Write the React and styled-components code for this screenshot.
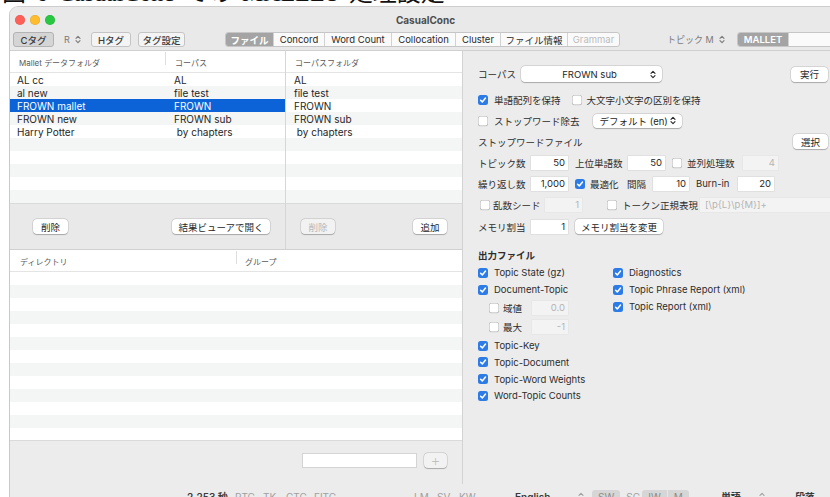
import React from 'react';
import styled, { createGlobalStyle } from 'styled-components';

const SANS = `Inter, "Noto Sans CJK JP", sans-serif`;

const GlobalStyle = createGlobalStyle`
  *, *::before, *::after { box-sizing: border-box; }
  html, body {
    margin: 0;
    padding: 0;
    width: 830px;
    height: 497px;
    overflow: hidden;
    background: #fff;
  }
  body {
    font-family: ${SANS};
    color: #2b2b2b;
  }
  #root { width: 830px; height: 497px; overflow: hidden; }
  svg { flex-shrink: 0; }
`;

const px = v => (v === undefined ? 0 : typeof v === 'number' ? `${v}px` : v);

const Caption = styled.div`
  height: 6px;
  overflow: hidden;
  padding-left: 2px;
  font-family: "Liberation Serif", "Noto Sans CJK JP", serif;
  font-size: 24px;
  line-height: 24px;
  white-space: nowrap;
  color: #111;
  word-spacing: 4px;
  span { display: block; margin-top: -19px; }
`;

const Window = styled.div`
  margin-left: 9px;
  width: 832px;
  height: 491px;
  background: #ececec;
  border-left: 1px solid #c9c9c9;
  border-top: 1px solid #cdcdcd;
  border-top-left-radius: 9px;
  overflow: hidden;
  display: flex;
  flex-direction: column;
`;

const TitleBar = styled.div`
  background: #e9e9e9;
  border-bottom: 1px solid #d0d0d0;
`;

const TitleRow = styled.div`
  height: 25px;
  display: grid;
  grid-template-columns: 1fr auto 1fr;
  align-items: center;
`;

const Lights = styled.div`
  display: flex;
  gap: 5px;
  padding-left: 5px;
`;

const Light = styled.span`
  width: 10px;
  height: 10px;
  border-radius: 50%;
  background: ${p => p.$c};
  box-shadow: inset 0 0 0 0.5px rgba(0, 0, 0, 0.12);
`;

const Title = styled.div`
  font-size: 10px;
  font-weight: 700;
  color: #4d4d4d;
`;

const Toolbar = styled.div`
  height: 18px;
  display: flex;
  align-items: flex-start;
  & > * { flex-shrink: 0; }
`;

const ToolButton = styled.div`
  width: ${p => p.$w}px;
  height: 15px;
  margin-left: ${p => px(p.$ml)};
  display: flex;
  align-items: center;
  justify-content: center;
  border: 1px solid ${p => (p.$on ? '#b3b3b3' : '#c4c4c4')};
  border-radius: 3px;
  background: ${p => (p.$on ? '#d5d5d5' : '#f4f4f4')};
  font-size: 9.5px;
  font-weight: 500;
  color: #3b3b3b;
`;

const ToolText = styled.div`
  width: ${p => p.$w}px;
  height: 15px;
  margin-left: ${p => px(p.$ml)};
  display: flex;
  align-items: center;
  gap: 5px;
  font-size: 9px;
  color: #7a7a7a;
  white-space: nowrap;
`;

const Segmented = styled.div`
  height: 15px;
  margin-left: ${p => px(p.$ml)};
  display: flex;
  border: 1px solid #c6c6c6;
  border-radius: 3px;
  overflow: hidden;
  background: #fafafa;
`;

const Segment = styled.div`
  width: ${p => p.$w}px;
  flex-shrink: 0;
  display: flex;
  align-items: center;
  justify-content: center;
  font-size: 9.5px;
  font-weight: ${p => (p.$on ? 600 : 400)};
  color: ${p => (p.$on ? '#fff' : p.$off ? '#bcbcbc' : '#2b2b2b')};
  background: ${p => (p.$on ? '#a4a4a4' : 'transparent')};
  white-space: nowrap;
  & + & { border-left: 1px solid #d2d2d2; }
`;

const Main = styled.div`
  height: 433px;
  display: flex;
`;

const LeftPane = styled.div`
  width: 453px;
  flex-shrink: 0;
  display: flex;
  flex-direction: column;
  background: #fff;
  border-right: 1px solid #d3d3d3;
`;

const TopTables = styled.div`
  height: 199px;
  display: flex;
  border-bottom: 1px solid #d0d0d0;
`;

const TablePane = styled.div`
  width: ${p => p.$w}px;
  display: flex;
  flex-direction: column;
  border-right: ${p => (p.$divider ? '1px solid #d6d6d6' : 'none')};
`;

const TableHead = styled.div`
  height: 22px;
  flex-shrink: 0;
  display: flex;
  align-items: center;
  padding-top: 1px;
  border-bottom: 1px solid #e4e4e4;
  font-size: 8px;
  color: #5a5a5a;
  background: #fff;
`;

const HeadCell = styled.div`
  position: relative;
  width: ${p => (p.$w ? `${p.$w}px` : 'auto')};
  flex: ${p => (p.$w ? 'none' : 1)};
  padding-left: ${p => p.$pl}px;
  white-space: nowrap;
  &::after {
    content: '';
    display: ${p => (p.$divider ? 'block' : 'none')};
    position: absolute;
    right: 0;
    top: -5px;
    width: 1px;
    height: 13px;
    background: #dedede;
  }
`;

const Rows = styled.div`
  height: ${p => (p.$h ? `${p.$h}px` : 'auto')};
  flex: ${p => (p.$h ? 'none' : 1)};
  overflow: hidden;
`;

const Row = styled.div`
  height: 13px;
  display: flex;
  align-items: center;
  font-size: 10px;
  white-space: pre;
  color: ${p => (p.$sel ? '#fff' : '#262626')};
  background: ${p => (p.$sel ? '#0b63d7' : p.$odd ? '#f4f5f5' : '#fff')};
`;

const Cell = styled.div`
  width: ${p => (p.$w ? `${p.$w}px` : 'auto')};
  flex: ${p => (p.$w ? 'none' : 1)};
  padding-left: ${p => p.$pl}px;
`;

const ButtonBar = styled.div`
  height: 46px;
  flex-shrink: 0;
  display: flex;
  align-items: center;
  justify-content: space-between;
  padding: 0 ${p => p.$pr}px 0 ${p => p.$pl}px;
  border-top: 1px solid #dadada;
  background: #e9e9e9;
`;

const PushButton = styled.div`
  width: ${p => p.$w}px;
  height: 15px;
  flex-shrink: 0;
  margin-left: ${p => px(p.$ml)};
  display: flex;
  align-items: center;
  justify-content: center;
  border-radius: 4px;
  background: ${p => (p.$off ? '#f2f2f2' : '#fff')};
  box-shadow: 0 0 0 0.5px rgba(0, 0, 0, 0.16), 0 0.5px 1px rgba(0, 0, 0, 0.22);
  font-size: 9.5px;
  color: ${p => (p.$off ? '#b8b8b8' : '#262626')};
  white-space: nowrap;
`;

const BottomBar = styled.div`
  height: 44px;
  flex-shrink: 0;
  display: flex;
  justify-content: flex-end;
  align-items: flex-start;
  gap: 7px;
  padding: 12px 15px 0 0;
  border-top: 1px solid #dadada;
  background: #ececec;
`;

const SearchField = styled.div`
  width: 115px;
  height: 15px;
  background: #fff;
  border: 1px solid #d4d4d4;
`;

const RightPane = styled.div`
  flex: 1;
  min-width: 0;
  display: flex;
  flex-direction: column;
  padding: 0 13px 0 15px;
  background: #ececec;
`;

const FormRow = styled.div`
  height: ${p => p.$h}px;
  margin-top: ${p => px(p.$mt)};
  flex-shrink: 0;
  display: flex;
  align-items: center;
`;

const Label = styled.div`
  width: ${p => (p.$w ? `${p.$w}px` : 'auto')};
  margin-left: ${p => px(p.$ml)};
  flex-shrink: 0;
  font-size: 9.5px;
  font-weight: ${p => (p.$bold ? 700 : 400)};
  color: #2d2d2d;
  white-space: nowrap;
`;

const Popup = styled.div`
  width: ${p => p.$w}px;
  height: ${p => p.$h}px;
  margin-left: ${p => px(p.$ml)};
  flex-shrink: 0;
  display: flex;
  align-items: center;
  padding: 0 6px 0 ${p => p.$pl}px;
  border-radius: 4px;
  background: #fff;
  box-shadow: 0 0 0 0.5px rgba(0, 0, 0, 0.16), 0 0.5px 1px rgba(0, 0, 0, 0.22);
  font-size: 9.5px;
  color: #262626;
  span {
    flex: 1;
    text-align: ${p => (p.$center ? 'center' : 'left')};
    white-space: nowrap;
  }
`;

const Field = styled.div`
  width: ${p => p.$w}px;
  height: 14px;
  margin-left: ${p => px(p.$ml)};
  flex-shrink: 0;
  padding: 0 3px 0 5px;
  background: ${p => (p.$off ? '#f3f3f3' : '#fff')};
  box-shadow: 0 0 0 0.5px rgba(0, 0, 0, ${p => (p.$off ? 0.04 : 0.1)});
  font-size: 9.5px;
  line-height: 14px;
  text-align: ${p => (p.$left ? 'left' : 'right')};
  color: ${p => (p.$off ? '#b4b4b4' : '#262626')};
  white-space: nowrap;
  overflow: hidden;
`;

const CheckWrap = styled.div`
  display: flex;
  align-items: center;
  gap: ${p => p.$gap}px;
  margin-left: ${p => px(p.$ml)};
  flex-shrink: 0;
`;

const Box = styled.span`
  width: 10px;
  height: 10px;
  flex-shrink: 0;
  display: flex;
  align-items: center;
  justify-content: center;
  border-radius: 2.5px;
  background: ${p => (p.$on ? '#2c7be6' : '#fff')};
  box-shadow: ${p => (p.$on ? 'none' : 'inset 0 0 0 0.5px rgba(0,0,0,0.32), 0 0.5px 0.5px rgba(0,0,0,0.08)')};
`;

const CheckText = styled.span`
  width: ${p => (p.$w ? `${p.$w}px` : 'auto')};
  font-size: 9.5px;
  color: #2d2d2d;
  white-space: nowrap;
`;

const OutputGrid = styled.div`
  display: flex;
  margin-top: 2px;
`;

const OutputColumn = styled.div`
  width: ${p => (p.$w ? `${p.$w}px` : 'auto')};
  display: flex;
  flex-direction: column;
`;

const OutputRow = styled.div`
  height: ${p => p.$h}px;
  display: flex;
  align-items: center;
  padding-left: ${p => p.$pl || 0}px;
`;

const StatusBar = styled.div`
  height: 22px;
  flex-shrink: 0;
  display: flex;
  align-items: flex-start;
  padding: 7px 0 0 177px;
  background: #ececec;
  & > * { flex-shrink: 0; }
`;

const Stat = styled.div`
  width: ${p => p.$w}px;
  margin-left: ${p => px(p.$ml)};
  font-size: 10px;
  line-height: 12px;
  font-weight: ${p => (p.$strong ? 600 : 400)};
  color: ${p => (p.$strong ? '#3a3a3a' : '#a0a0a0')};
  white-space: nowrap;
`;

const Pill = styled.div`
  display: flex;
  height: 14px;
  margin-left: ${p => px(p.$ml)};
  margin-top: -1px;
  border-radius: 3px;
  background: #d6d6d6;
  overflow: hidden;
  span {
    padding: 1px 6px 0;
    font-size: 10px;
    line-height: 12px;
    color: #8d8d8d;
  }
  span + span { border-left: 1px solid #e6e6e6; }
`;

const Chevrons = () => (
  <svg width="6" height="9" viewBox="0 0 6 9" fill="none" stroke="currentColor" strokeWidth="1.1" strokeLinecap="round" strokeLinejoin="round">
    <path d="M1 3.4 3 1.4 5 3.4M1 5.6 3 7.6 5 5.6" />
  </svg>
);

const Tick = () => (
  <svg width="8" height="8" viewBox="0 0 8 8" fill="none" stroke="#fff" strokeWidth="1.5" strokeLinecap="round" strokeLinejoin="round">
    <path d="M1.6 4.2 3.3 5.9 6.5 2" />
  </svg>
);

const Check = ({ on, label, ml, gap = 6, w }) => (
  <CheckWrap $ml={ml} $gap={gap}>
    <Box $on={on}>{on && <Tick />}</Box>
    {label && <CheckText $w={w}>{label}</CheckText>}
  </CheckWrap>
);

const malletRows = [
  ['AL cc', 'AL'],
  ['al new', 'file test'],
  ['FROWN mallet', 'FROWN'],
  ['FROWN new', 'FROWN sub'],
  ['Harry Potter', ' by chapters'],
];

const corpusFolders = ['AL', 'file test', 'FROWN', 'FROWN sub', ' by chapters'];

const fill = (list, n) => [...list, ...Array(Math.max(0, n - list.length)).fill(null)];

const segments = [
  { label: 'ファイル', w: 47, on: true },
  { label: 'Concord', w: 51 },
  { label: 'Word Count', w: 67 },
  { label: 'Collocation', w: 64 },
  { label: 'Cluster', w: 45 },
  { label: 'ファイル情報', w: 67 },
  { label: 'Grammar', w: 52, off: true },
];

export default function App() {
  return (
    <>
      <GlobalStyle />
      <Caption><span>図 6 CasualConc での MALLET 処理設定</span></Caption>
      <Window>
        <TitleBar>
          <TitleRow>
            <Lights>
              <Light $c="#fe5f57" />
              <Light $c="#febc2e" />
              <Light $c="#28c840" />
            </Lights>
            <Title>CasualConc</Title>
            <div />
          </TitleRow>
          <Toolbar>
            <ToolButton $w={41} $ml={3} $on>Cタグ</ToolButton>
            <ToolText $w={14} $ml={10}>R <Chevrons /></ToolText>
            <ToolButton $w={40} $ml={13}>Hタグ</ToolButton>
            <ToolButton $w={47} $ml={7}>タグ設定</ToolButton>
            <Segmented $ml={40}>
              {segments.map(s => (
                <Segment key={s.label} $w={s.w} $on={s.on} $off={s.off}>{s.label}</Segment>
              ))}
            </Segmented>
            <ToolText $w={56} $ml={47}>トピック M <Chevrons /></ToolText>
            <Segmented $ml={14}>
              <Segment $w={50} $on>MALLET</Segment>
              <Segment $w={70} />
            </Segmented>
          </Toolbar>
        </TitleBar>

        <Main>
          <LeftPane>
            <TopTables>
              <TablePane $w={276} $divider>
                <TableHead>
                  <HeadCell $w={156} $pl={9} $divider>Mallet データフォルダ</HeadCell>
                  <HeadCell $pl={9}>コーパス</HeadCell>
                </TableHead>
                <Rows $h={130}>
                  {fill(malletRows, 10).map((r, i) => (
                    <Row key={i} $odd={i % 2 === 1} $sel={i === 2}>
                      <Cell $w={157} $pl={7}>{r ? r[0] : ''}</Cell>
                      <Cell $pl={7}>{r ? r[1] : ''}</Cell>
                    </Row>
                  ))}
                </Rows>
                <ButtonBar $pl={23} $pr={15}>
                  <PushButton $w={35}>削除</PushButton>
                  <PushButton $w={98}>結果ビューアで開く</PushButton>
                </ButtonBar>
              </TablePane>
              <TablePane $w={176}>
                <TableHead>
                  <HeadCell $pl={9}>コーパスフォルダ</HeadCell>
                </TableHead>
                <Rows $h={130}>
                  {fill(corpusFolders, 10).map((r, i) => (
                    <Row key={i} $odd={i % 2 === 1}>
                      <Cell $pl={8}>{r || ''}</Cell>
                    </Row>
                  ))}
                </Rows>
                <ButtonBar $pl={15} $pr={15}>
                  <PushButton $w={34} $off>削除</PushButton>
                  <PushButton $w={34}>追加</PushButton>
                </ButtonBar>
              </TablePane>
            </TopTables>

            <TableHead>
              <HeadCell $w={227} $pl={10} $divider>ディレクトリ</HeadCell>
              <HeadCell $pl={8}>グループ</HeadCell>
            </TableHead>
            <Rows>
              {fill([], 14).map((_, i) => (
                <Row key={i} $odd={i % 2 === 1} />
              ))}
            </Rows>
            <BottomBar>
              <SearchField />
              <PushButton $w={23} $off>＋</PushButton>
            </BottomBar>
          </LeftPane>

          <RightPane>
            <FormRow $h={16} $mt={15}>
              <Label $w={43}>コーパス</Label>
              <Popup $w={141} $h={16} $pl={8} $center>
                <span>FROWN sub</span>
                <Chevrons />
              </Popup>
              <PushButton $w={37} $ml="auto">実行</PushButton>
            </FormRow>

            <FormRow $h={21} $mt={7}>
              <Check on label="単語配列を保持" />
              <Check label="大文字小文字の区別を保持" ml={11} gap={5} />
            </FormRow>

            <FormRow $h={21}>
              <Check label="ストップワード除去" />
              <Popup $w={89} $h={14} $pl={7} $ml={13}>
                <span>デフォルト (en)</span>
                <Chevrons />
              </Popup>
            </FormRow>

            <FormRow $h={21}>
              <Label>ストップワードファイル</Label>
              <PushButton $w={35} $ml="auto">選択</PushButton>
            </FormRow>

            <FormRow $h={21}>
              <Label $w={53}>トピック数</Label>
              <Field $w={37}>50</Field>
              <Label $w={53} $ml={7}>上位単語数</Label>
              <Field $w={37}>50</Field>
              <Check label="並列処理数" ml={7} gap={5} w={56} />
              <Field $w={35} $off>4</Field>
            </FormRow>

            <FormRow $h={21}>
              <Label $w={53}>繰り返し数</Label>
              <Field $w={37}>1,000</Field>
              <Check on label="最適化" ml={7} gap={5} w={37} />
              <Label $w={26}>間隔</Label>
              <Field $w={36}>10</Field>
              <Label $w={42} $ml={7}>Burn-in</Label>
              <Field $w={36}>20</Field>
            </FormRow>

            <FormRow $h={21}>
              <Check label="乱数シード" ml={2} gap={3} w={52} />
              <Field $w={37} $off>1</Field>
              <Check label="トークン正規表現" ml={25} gap={5} w={78} />
              <Field $w={140} $off $left>{'[\\p{L}\\p{M}]+'}</Field>
            </FormRow>

            <FormRow $h={21} $mt={1}>
              <Label $w={53}>メモリ割当</Label>
              <Field $w={37}>1</Field>
              <PushButton $w={88} $ml={7}>メモリ割当を変更</PushButton>
            </FormRow>

            <FormRow $h={14} $mt={11}>
              <Label $bold>出力ファイル</Label>
            </FormRow>

            <OutputGrid>
              <OutputColumn $w={135}>
                <OutputRow $h={17}><Check on label="Topic State (gz)" /></OutputRow>
                <OutputRow $h={17}><Check on label="Document-Topic" /></OutputRow>
                <OutputRow $h={19.5} $pl={11}>
                  <Check label="域値" gap={4} w={29} />
                  <Field $w={36} $off>0.0</Field>
                </OutputRow>
                <OutputRow $h={19.5} $pl={11}>
                  <Check label="最大" gap={4} w={29} />
                  <Field $w={36} $off>-1</Field>
                </OutputRow>
                <OutputRow $h={17}><Check on label="Topic-Key" /></OutputRow>
                <OutputRow $h={16.7}><Check on label="Topic-Document" /></OutputRow>
                <OutputRow $h={16.7}><Check on label="Topic-Word Weights" /></OutputRow>
                <OutputRow $h={16.7}><Check on label="Word-Topic Counts" /></OutputRow>
              </OutputColumn>
              <OutputColumn>
                <OutputRow $h={17}><Check on label="Diagnostics" /></OutputRow>
                <OutputRow $h={17}><Check on label="Topic Phrase Report (xml)" /></OutputRow>
                <OutputRow $h={17}><Check on label="Topic Report (xml)" /></OutputRow>
              </OutputColumn>
            </OutputGrid>
          </RightPane>
        </Main>

        <StatusBar>
          <Stat $w={48} $strong>2,253 秒</Stat>
          <Stat $w={28}>RTG</Stat>
          <Stat $w={23}>TK</Stat>
          <Stat $w={28}>CTG</Stat>
          <Stat $w={100}>FITG</Stat>
          <Stat $w={23}>LM</Stat>
          <Stat $w={22}>SV</Stat>
          <Stat $w={56}>KW</Stat>
          <Stat $w={63} $strong>English</Stat>
          <Stat $w={14}><Chevrons /></Stat>
          <Pill><span>SW</span></Pill>
          <Stat $w={16} $ml={6}>SC</Stat>
          <Pill><span>IW</span><span>M</span></Pill>
          <Stat $w={38} $ml={32} $strong>単語</Stat>
          <Stat $w={36}><Chevrons /></Stat>
          <Stat $w={40} $strong>段落</Stat>
          <Stat $w={14}><Chevrons /></Stat>
        </StatusBar>
      </Window>
    </>
  );
}
